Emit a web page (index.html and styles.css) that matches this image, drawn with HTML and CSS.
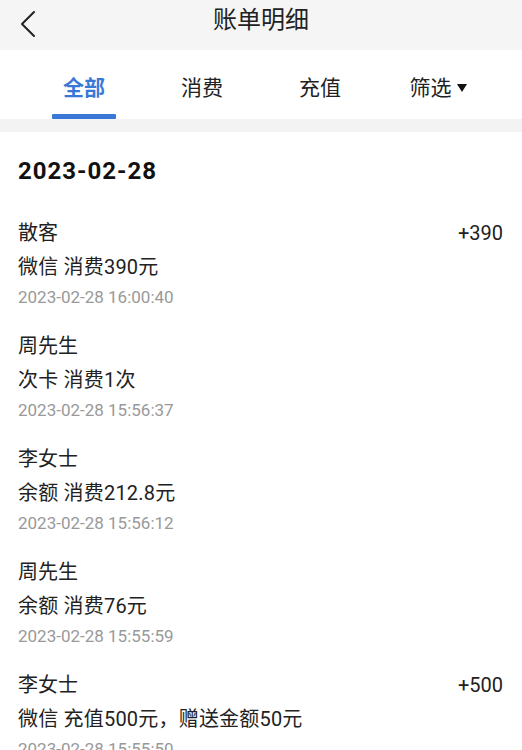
FILE: index.html
```html
<!DOCTYPE html>
<html lang="zh-CN">
<head>
  <meta charset="UTF-8" />
  <meta name="viewport" content="width=device-width, initial-scale=1.0" />
  <title>账单明细</title>
  <link rel="stylesheet" href="styles.css">
</head>
<body>
  <div class="page">
    <header class="nav-bar">
      <button class="back-btn" aria-label="返回">
        <svg width="16" height="28" viewBox="0 0 16 28">
          <polyline points="14,2 2,14 14,26" fill="none" stroke="#222" stroke-width="2" stroke-linecap="round" stroke-linejoin="round" />
        </svg>
      </button>
      <h1 class="nav-title">账单明细</h1>
      <span></span>
    </header>

    <nav class="tabs">
      <div class="tab active"><span class="tab-label">全部</span></div>
      <div class="tab"><span class="tab-label">消费</span></div>
      <div class="tab"><span class="tab-label">充值</span></div>
      <div class="tab"><span class="tab-label">筛选<i class="caret"></i></span></div>
    </nav>

    <div class="divider"></div>

    <section class="bill-list">
      <h2 class="bill-date">2023-02-28</h2>

      <div class="bill-item">
        <div class="bill-row">
          <span class="bill-name">散客</span>
          <span class="bill-amount">+390</span>
        </div>
        <div class="bill-desc">微信 消费390元</div>
        <div class="bill-time">2023-02-28 16:00:40</div>
      </div>

      <div class="bill-item">
        <div class="bill-row">
          <span class="bill-name">周先生</span>
        </div>
        <div class="bill-desc">次卡 消费1次</div>
        <div class="bill-time">2023-02-28 15:56:37</div>
      </div>

      <div class="bill-item">
        <div class="bill-row">
          <span class="bill-name">李女士</span>
        </div>
        <div class="bill-desc">余额 消费212.8元</div>
        <div class="bill-time">2023-02-28 15:56:12</div>
      </div>

      <div class="bill-item">
        <div class="bill-row">
          <span class="bill-name">周先生</span>
        </div>
        <div class="bill-desc">余额 消费76元</div>
        <div class="bill-time">2023-02-28 15:55:59</div>
      </div>

      <div class="bill-item">
        <div class="bill-row">
          <span class="bill-name">李女士</span>
          <span class="bill-amount">+500</span>
        </div>
        <div class="bill-desc">微信 充值500元，赠送金额50元</div>
        <div class="bill-time">2023-02-28 15:55:50</div>
      </div>
    </section>
  </div>
</body>
</html>
```

FILE: styles.css
```css
* {
  box-sizing: border-box;
}

body {
  margin: 0;
  font-family: Roboto, "Noto Sans CJK SC", sans-serif;
  background-color: #fff;
  color: #222;
  overflow: hidden;
}

.page {
  width: 522px;
  height: 750px;
  overflow: hidden;
}

.nav-bar {
  height: 50px;
  background-color: #f5f5f5;
  display: grid;
  grid-template-columns: 1fr auto 1fr;
  align-items: center;
}

.back-btn {
  justify-self: start;
  background: none;
  border: none;
  padding: 0 0 0 20px;
  margin-top: -2px;
  display: flex;
  cursor: pointer;
}

.nav-title {
  margin: 0;
  font-size: 24px;
  font-weight: normal;
  line-height: 30px;
  color: #222;
  margin-top: -10px;
}

.tabs {
  height: 69px;
  display: flex;
  padding: 0 25px;
  background-color: #fff;
}

.tab {
  flex: 1;
  display: flex;
  flex-direction: column;
  align-items: center;
  padding-top: 23px;
  font-size: 21px;
  color: #222;
}

.tab-label {
  line-height: 30px;
  display: flex;
  align-items: center;
}

.tab.active {
  color: #3a78d8;
  font-weight: bold;
}

.tab.active::after {
  content: "";
  width: 64px;
  height: 5px;
  margin-top: 11px;
  background-color: #3a78d8;
  border-radius: 1px;
}

.caret {
  width: 0;
  height: 0;
  margin-left: 5px;
  border-left: 5px solid transparent;
  border-right: 5px solid transparent;
  border-top: 8px solid #111;
}

.divider {
  height: 13px;
  background-color: #f3f3f3;
}

.bill-list {
  padding: 0 19px 0 18px;
}

.bill-date {
  margin: 24px 0 30px;
  font-size: 24px;
  font-weight: bold;
  line-height: 30px;
  letter-spacing: 1px;
  color: #111;
}

.bill-item {
  margin-bottom: 19px;
}

.bill-row {
  display: flex;
  justify-content: space-between;
  align-items: center;
  line-height: 34px;
  font-size: 20px;
}

.bill-amount {
  font-size: 20px;
}

.bill-desc {
  line-height: 34px;
  font-size: 20px;
  letter-spacing: 0.2px;
}

.bill-time {
  line-height: 26px;
  font-size: 17px;
  color: #999;
}
```
